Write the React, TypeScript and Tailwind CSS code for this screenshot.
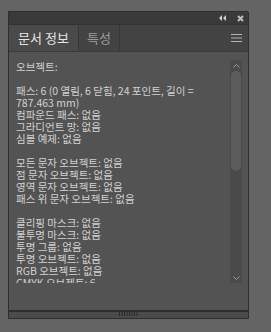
const lines: string[] = [
  "오브젝트:",
  "",
  "패스: 6 (0 열림, 6 닫힘, 24 포인트, 길이 =",
  "787.463 mm)",
  "컴파운드 패스: 없음",
  "그라디언트 망: 없음",
  "심볼 예제: 없음",
  "",
  "모든 문자 오브젝트: 없음",
  "점 문자 오브젝트: 없음",
  "영역 문자 오브젝트: 없음",
  "패스 위 문자 오브젝트: 없음",
  "",
  "클리핑 마스크: 없음",
  "불투명 마스크: 없음",
  "투명 그룹: 없음",
  "투명 오브젝트: 없음",
  "RGB 오브젝트: 없음",
  "CMYK 오브젝트: 6",
];

function Collapse() {
  return (
    <svg width="7" height="6" viewBox="0 0 7 6">
      <path d="M3 0 L0 3 L3 6 Z M7 0 L4 3 L7 6 Z" fill="#cfcfcf" />
    </svg>
  );
}

function Close() {
  return (
    <svg width="7" height="7" viewBox="0 0 7 7">
      <path d="M1 1 L6 6 M6 1 L1 6" stroke="#bdbdbd" strokeWidth="2" />
    </svg>
  );
}

function Menu() {
  return (
    <svg width="11" height="8" viewBox="0 0 11 8">
      <path d="M0 0.5 H11 M0 4 H11 M0 7.5 H11" stroke="#b4b4b4" strokeWidth="1" />
    </svg>
  );
}

function Grip() {
  return (
    <svg width="20" height="5" viewBox="0 0 20 5">
      {[0, 1, 2, 3, 4, 5, 6, 7].map((i) => (
        <rect key={i} x={i * 2.5} y="0" width="1" height="5" fill="#2a2a2a" />
      ))}
    </svg>
  );
}

export default function App() {
  return (
    <div
      className="w-[271px] h-[332px] bg-[#646464] pt-[11px] pl-[8px]"
      style={{ fontFamily: '"Noto Sans CJK KR", "Noto Sans", sans-serif' }}
    >
      <div className="w-[241px] h-[308px] border border-[#2e2e2e] rounded-tr-[2px] flex flex-col bg-[#535353]">
        <div className="h-[12px] bg-[#3a3a3a] flex items-center justify-end gap-[11px] pr-[4px]">
          <Collapse />
          <Close />
        </div>
        <div className="h-[28px] bg-[#434343] flex border-t border-[#333] border-b border-b-[#3a3a3a]">
          <div className="w-[70px] bg-[#4a4a4a] border-r border-[#383838] flex items-center justify-center text-[13px] text-[#e6e6e6]">
            문서 정보
          </div>
          <div className="w-[41px] border-r border-[#383838] flex items-center justify-center text-[13px] text-[#9c9c9c]">
            특성
          </div>
          <div className="flex-1 flex items-center justify-end pr-[6px]">
            <Menu />
          </div>
        </div>
        <div className="flex-1 flex pt-[8px] pl-[7px] pr-[6px]">
          <div className="flex-1 h-[223px] overflow-hidden pt-[1px] text-[10.5px] leading-[12px] text-[#d2d2d2] whitespace-nowrap">
            {lines.map((l, i) => (
              <div key={i} className="h-[12px]">
                {l}
              </div>
            ))}
          </div>
          <div className="w-[12px] h-[223px] bg-[#4a4a4a] flex flex-col items-center">
            <div className="h-[11px] flex items-center justify-center">
              <svg width="7" height="4" viewBox="0 0 7 4">
                <path d="M0.5 3.5 L3.5 0.5 L6.5 3.5" stroke="#9a9a9a" fill="none" />
              </svg>
            </div>
            <div className="w-[10px] h-[100px] rounded-[5px] bg-[#5c5c5c]" />
            <div className="flex-1" />
            <div className="h-[11px] flex items-center justify-center">
              <svg width="7" height="4" viewBox="0 0 7 4">
                <path d="M0.5 0.5 L3.5 3.5 L6.5 0.5" stroke="#9a9a9a" fill="none" />
              </svg>
            </div>
          </div>
        </div>
        <div className="h-[8px] border-t-2 border-[#2e2e2e] bg-[#4b4b4b] flex justify-center items-start">
          <div className="-mt-[1px]">
            <Grip />
          </div>
        </div>
      </div>
    </div>
  );
}
